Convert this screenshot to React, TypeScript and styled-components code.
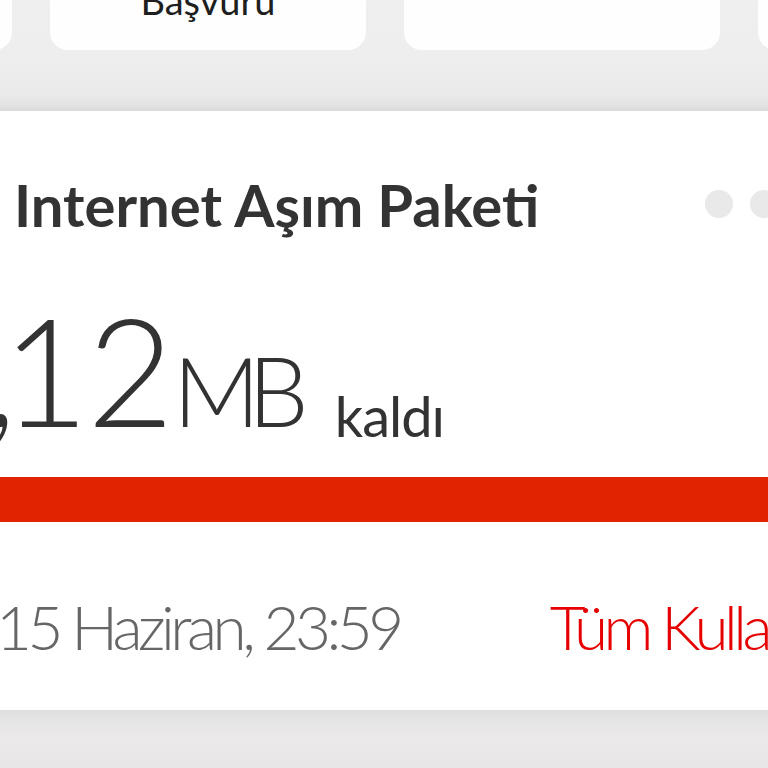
import React from "react";
import styled, { createGlobalStyle } from "styled-components";

const Global = createGlobalStyle`
  html, body {
    margin: 0;
    padding: 0;
    background: #efeeee;
    overflow: hidden;
  }
  * { box-sizing: border-box; }
`;

const Screen = styled.div`
  width: 768px;
  height: 768px;
  overflow: hidden;
  display: flex;
  flex-direction: column;
  background: #efeeee;
  font-family: Lato, "Open Sans", sans-serif;
`;

const TopStrip = styled.div`
  height: 111px;
  flex-shrink: 0;
  background: linear-gradient(
    to bottom,
    #f0efef 0px,
    #efeeee 60px,
    #ebeaea 95px,
    #e3e2e2 106px,
    #dadada 111px
  );
`;

const TileRow = styled.div`
  display: flex;
  gap: 38px;
  margin-left: -304px;
  margin-top: -60px;
`;

const Tile = styled.div`
  flex-shrink: 0;
  width: 316px;
  height: 110px;
  border-radius: 18px;
  background: #fefefe;
  display: flex;
  align-items: flex-end;
  justify-content: center;
  padding-bottom: 31px;
  font-size: 38px;
  line-height: 38px;
  color: #1e1e1e;
`;

const Card = styled.div`
  height: 599px;
  flex-shrink: 0;
  background: #ffffff;
  display: flex;
  flex-direction: column;
`;

const Header = styled.div`
  display: flex;
  align-items: center;
  justify-content: space-between;
  padding: 62px 0 0 14px;
`;

const Title = styled.h2`
  margin: 0;
  font-size: 58px;
  font-weight: 700;
  color: #333333;
  line-height: 64px;
  white-space: nowrap;
`;

const Dots = styled.div`
  display: flex;
  gap: 17px;
  margin-right: -10px;
  margin-top: -3px;
`;

const Dot = styled.span`
  width: 28px;
  height: 28px;
  border-radius: 50%;
  background: #e9e9e9;
`;

const Amount = styled.div`
  margin-left: -101px;
  margin-top: 57px;
  color: #333333;
  font-weight: 300;
  font-size: 150px;
  line-height: 150px;
  height: 150px;
  white-space: nowrap;
`;

const Number = styled.span`
  letter-spacing: -2px;
`;

const Sep = styled.span`
  margin-right: -13px;
`;

const Unit = styled.span`
  font-size: 96px;
  line-height: 96px;
  letter-spacing: -12px;
  margin-left: 1px;
`;

const Left = styled.span`
  font-size: 56px;
  line-height: 56px;
  letter-spacing: -1px;
  margin-left: 38px;
  font-weight: 400;
  vertical-align: -10px;
`;

const Bar = styled.div`
  height: 45px;
  margin-top: 33px;
  background: #e12300;
`;

const Footer = styled.div`
  display: flex;
  align-items: center;
  gap: 150px;
  margin-top: 73px;
  font-weight: 300;
  font-size: 62px;
  line-height: 62px;
  letter-spacing: -4.5px;
  white-space: nowrap;
`;

const Expiry = styled.span`
  color: #666666;
  margin-left: -4px;
`;

const AllLink = styled.span`
  color: #e60000;
`;

const Bottom = styled.div`
  flex: 1;
  background: linear-gradient(
    to bottom,
    #dedede 0px,
    #e6e5e5 10px,
    #ebe9e9 30px,
    #e8e6e6 100%
  );
`;

export default function App() {
  return (
    <>
      <Global />
      <Screen>
        <TopStrip>
          <TileRow>
            <Tile />
            <Tile>Başvuru</Tile>
            <Tile />
            <Tile />
          </TileRow>
        </TopStrip>
        <Card>
          <Header>
            <Title>Internet Aşım Paketi</Title>
            <Dots>
              <Dot />
              <Dot />
            </Dots>
          </Header>
          <Amount>
            <Number>
              1<Sep>,</Sep>12
            </Number>
            <Unit>MB</Unit>
            <Left>kaldı</Left>
          </Amount>
          <Bar />
          <Footer>
            <Expiry>15 Haziran, 23:59</Expiry>
            <AllLink>Tüm Kullanımlar</AllLink>
          </Footer>
        </Card>
        <Bottom />
      </Screen>
    </>
  );
}
